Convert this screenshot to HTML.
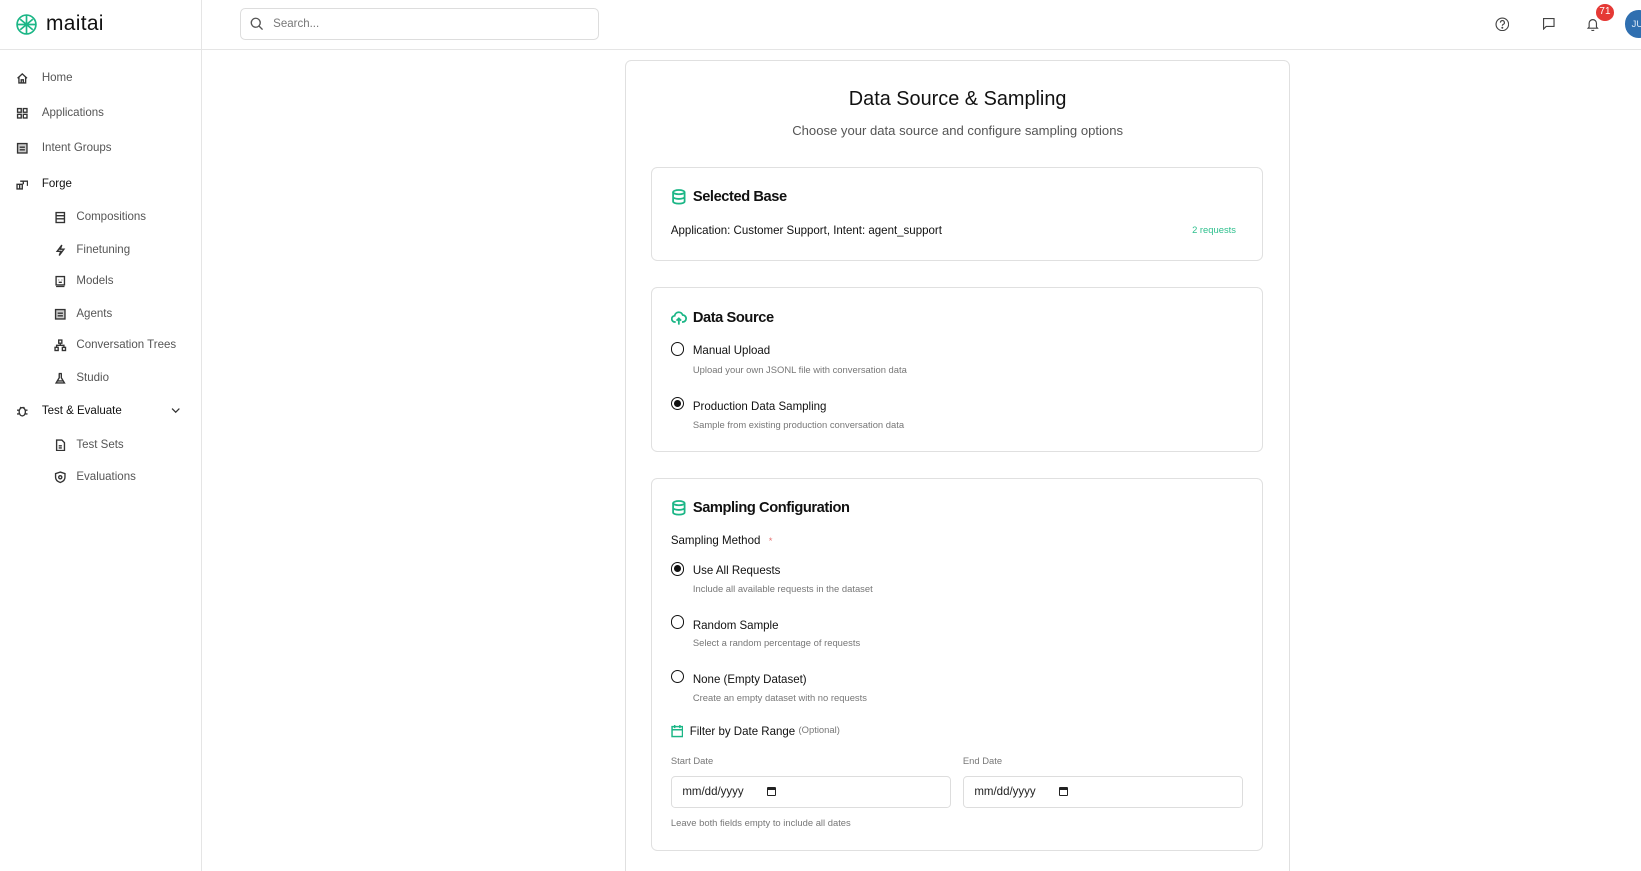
<!DOCTYPE html>
<html><head><meta charset="utf-8">
<style>
html{zoom:1.0466;overflow:hidden;height:832px}
*{box-sizing:border-box;margin:0;padding:0}
body{width:1568px;height:832px;overflow:hidden;background:#fff;font-family:"Liberation Sans",sans-serif;color:#111;position:relative}
.abs{position:absolute}
.side{left:0;top:0;width:193px;height:832px;border-right:1px solid #e5e5e5}
.hdr{left:0;top:47px;width:1568px;height:1px;background:#e5e5e5}
.nav{position:absolute;font-size:11px;color:#555;white-space:nowrap;padding-top:2px}
.nav svg{position:absolute;width:12px;height:12px;fill:none;stroke:#333;stroke-width:1.3}
.card{position:absolute;border:1px solid #e0e0e0;border-radius:6px;background:#fff}
.ttl{position:absolute;font-size:14px;font-weight:bold;letter-spacing:-0.4px;color:#111;padding-top:2px}
.ic{position:absolute;width:15px;height:15px;fill:none;stroke:#1bb686;stroke-width:1.7}
.radio{position:absolute;width:13px;height:13px;border:1.3px solid #111;border-radius:50%}
.radio.on::after{content:"";position:absolute;left:2px;top:2px;width:6.5px;height:6.5px;border-radius:50%;background:#111}
.lbl{position:absolute;font-size:11px;color:#111;padding-top:2px}
.desc{position:absolute;font-size:9px;color:#777;padding-top:1px}
.inp{position:absolute;width:268px;height:31px;border:1px solid #ddd;border-radius:4px;font-size:11px;color:#222;padding:9px 10px}
.cal{display:inline-block;width:9px;height:9px;border:1.5px solid #222;border-top-width:3px;border-radius:1px;margin-left:22px;vertical-align:-1px}
</style></head><body>
<div class="abs side"></div>
<div class="abs hdr"></div>
<svg class="abs" style="left:14px;top:12px" width="22" height="22" viewBox="0 0 22 22" fill="none" stroke="#1bb686" stroke-width="1.6"><circle cx="11" cy="11" r="9"/><path d="M5 6l12 10M17 6L5 16M11 2v18M2 11h18"/></svg>
<div class="abs" style="left:44px;top:11px;font-size:20px;letter-spacing:0.3px;color:#111">maitai</div>
<div class="abs" style="left:229px;top:8px;width:343px;height:30px;border:1px solid #ddd;border-radius:5px"></div>
<svg class="abs" style="left:239px;top:16px" width="13" height="13" viewBox="0 0 13 13" fill="none" stroke="#555" stroke-width="1.3"><circle cx="5.5" cy="5.5" r="4.3"/><path d="M8.7 8.7l3.3 3.3"/></svg>
<div class="abs" style="left:261px;top:17px;font-size:11px;color:#777">Search...</div>
<svg class="abs" style="left:1428px;top:16px" width="14" height="14" viewBox="0 0 14 14" fill="none" stroke="#444" stroke-width="1.1"><circle cx="7" cy="7" r="6"/><path d="M5.2 5.4a1.9 1.9 0 1 1 2.6 1.7c-.6.3-.8.6-.8 1.3"/><circle cx="7" cy="10.3" r=".4" fill="#444"/></svg>
<svg class="abs" style="left:1473px;top:16px" width="13" height="13" viewBox="0 0 13 13" fill="none" stroke="#444" stroke-width="1.1"><path d="M1.5 1.5h10v7.5H4l-2.5 2.5z"/></svg>
<svg class="abs" style="left:1515px;top:16px" width="13" height="14" viewBox="0 0 13 14" fill="none" stroke="#444" stroke-width="1.1"><path d="M3 9.5V6a3.5 3.5 0 0 1 7 0v3.5l1 1.2H2zM5.3 12.3a1.4 1.4 0 0 0 2.4 0"/></svg>
<div class="abs" style="left:1525px;top:4px;width:17px;height:16px;border-radius:50%;background:#e53935;color:#fff;font-size:9.5px;text-align:center;line-height:16px">71</div>
<div class="abs" style="left:1553px;top:10px;width:26px;height:26px;border-radius:50%;background:#2f6fb0;color:#dce9f7;font-size:9px;line-height:26px;padding-left:6px">JU</div>
<div class="nav" style="left:40px;top:67px"><svg style="left:-25px;top:2px" viewBox="0 0 12 12"><path d="M1.5 6L6 1.8 10.5 6M2.8 5v5.5h6.4V5M5 10.5V7.5h2v3"/></svg>Home</div>
<div class="nav" style="left:40px;top:100px"><svg style="left:-25px;top:2px" viewBox="0 0 12 12"><rect x="1.5" y="1.5" width="3.5" height="3.5"/><rect x="7" y="1.5" width="3.5" height="3.5"/><rect x="1.5" y="7" width="3.5" height="3.5"/><rect x="7" y="7" width="3.5" height="3.5"/></svg>Applications</div>
<div class="nav" style="left:40px;top:134px"><svg style="left:-25px;top:2px" viewBox="0 0 12 12"><rect x="1.5" y="1.5" width="9" height="9" fill="#ccc"/><path d="M3.5 5h5M3.5 7.5h5"/></svg>Intent Groups</div>
<div class="nav" style="left:40px;top:168px;color:#111"><svg style="left:-25px;top:2px" viewBox="0 0 12 12"><path d="M1 6h5v4.5H1zM4 3h7v4.5M3.5 6v4.5M7 3v3"/></svg>Forge</div>
<div class="nav" style="left:73px;top:200px"><svg style="left:-21px;top:2px" viewBox="0 0 12 12"><rect x="2" y="1.5" width="8" height="9.5"/><path d="M2 4.5h8M2 7.5h8"/></svg>Compositions</div>
<div class="nav" style="left:73px;top:231px"><svg style="left:-21px;top:2px" viewBox="0 0 12 12"><path d="M7.5 1L3 7h3.5L5 11l4.5-6H6z"/></svg>Finetuning</div>
<div class="nav" style="left:73px;top:261px"><svg style="left:-21px;top:2px" viewBox="0 0 12 12"><rect x="2" y="1.5" width="8" height="8"/><path d="M2 11h8M4.5 4.5v.5M7.5 4.5v.5M4.5 7h3"/></svg>Models</div>
<div class="nav" style="left:73px;top:292px"><svg style="left:-21px;top:2px" viewBox="0 0 12 12"><rect x="1.5" y="1.5" width="9" height="9" fill="#ccc"/><path d="M3.5 5h5M3.5 7.5h5"/></svg>Agents</div>
<div class="nav" style="left:73px;top:322px"><svg style="left:-21px;top:2px" viewBox="0 0 12 12"><rect x="4.5" y="1" width="3" height="3"/><rect x="1" y="8" width="3" height="3"/><rect x="8" y="8" width="3" height="3"/><path d="M6 4v2M2.5 8V6h7v2"/></svg>Conversation Trees</div>
<div class="nav" style="left:73px;top:353px"><svg style="left:-21px;top:2px" viewBox="0 0 12 12"><path d="M4.5 1.5h3M5 1.5v4L2 10.5h8L7 5.5v-4M3 8.5h6"/></svg>Studio</div>
<div class="nav" style="left:40px;top:385px;color:#111"><svg style="left:-25px;top:2px" viewBox="0 0 12 12"><ellipse cx="6" cy="6.5" rx="3" ry="4"/><path d="M1 5h2M9 5h2M1 8.5h2M9 8.5h2M4 2l1 1M8 2L7 3"/></svg>Test &amp; Evaluate</div>
<svg class="abs" style="left:163px;top:389px" width="9" height="7" viewBox="0 0 9 7" fill="none" stroke="#333" stroke-width="1.2"><path d="M1 1.5l3.5 3.5L8 1.5"/></svg>
<div class="nav" style="left:73px;top:417px"><svg style="left:-21px;top:2px" viewBox="0 0 12 12"><path d="M2.5 1h5l2.5 2.5V11h-7.5zM4.5 6.5h3M4.5 8.5h3"/></svg>Test Sets</div>
<div class="nav" style="left:73px;top:448px"><svg style="left:-21px;top:2px" viewBox="0 0 12 12"><path d="M6 1l4.5 1.5v3.5c0 2.5-2 4.2-4.5 5-2.5-.8-4.5-2.5-4.5-5V2.5z"/><circle cx="6" cy="6" r="1.5"/></svg>Evaluations</div>
<div class="card" style="left:597px;top:57px;width:636px;height:790px"></div>
<div class="abs" style="left:597px;width:636px;top:84px;text-align:center;font-size:19px;color:#111">Data Source &amp; Sampling</div>
<div class="abs" style="left:597px;width:636px;top:118px;text-align:center;font-size:12.5px;color:#555">Choose your data source and configure sampling options</div>
<div class="card" style="left:622px;top:160px;width:585px;height:89px"></div>
<svg class="ic" style="left:641px;top:181px" viewBox="0 0 15 15"><ellipse cx="7.5" cy="3" rx="5.5" ry="2"/><path d="M2 3v9c0 1.1 2.5 2 5.5 2s5.5-.9 5.5-2V3M2 7.5c0 1.1 2.5 2 5.5 2s5.5-.9 5.5-2"/></svg>
<div class="ttl" style="left:662px;top:179px">Selected Base</div>
<div class="lbl" style="left:641px;top:213px">Application: Customer Support, Intent: agent_support</div>
<div class="abs" style="left:1139px;top:214px;font-size:9px;color:#2fc08e">2 requests</div>
<div class="card" style="left:622px;top:274px;width:585px;height:158px"></div>
<svg class="ic" style="left:641px;top:296px" viewBox="0 0 15 15"><path d="M4.5 11.5H4a3 3 0 0 1-.5-6 4 4 0 0 1 7.7-.7A3 3 0 0 1 11 11.5h-.5M7.5 8v6M5.3 10.2l2.2-2.2 2.2 2.2"/></svg>
<div class="ttl" style="left:662px;top:294px">Data Source</div>
<div class="radio" style="left:641px;top:327px"></div>
<div class="lbl" style="left:662px;top:328px">Manual Upload</div>
<div class="desc" style="left:662px;top:347px">Upload your own JSONL file with conversation data</div>
<div class="radio on" style="left:641px;top:379px"></div>
<div class="lbl" style="left:662px;top:381px">Production Data Sampling</div>
<div class="desc" style="left:662px;top:399px">Sample from existing production conversation data</div>
<div class="card" style="left:622px;top:457px;width:585px;height:356px"></div>
<svg class="ic" style="left:641px;top:478px" viewBox="0 0 15 15"><ellipse cx="7.5" cy="3" rx="5.5" ry="2"/><path d="M2 3v9c0 1.1 2.5 2 5.5 2s5.5-.9 5.5-2V3M2 7.5c0 1.1 2.5 2 5.5 2s5.5-.9 5.5-2"/></svg>
<div class="ttl" style="left:662px;top:476px">Sampling Configuration</div>
<div class="lbl" style="left:641px;top:509px">Sampling Method <span style="color:#e57373;font-size:9px;margin-left:5px">*</span></div>
<div class="radio on" style="left:641px;top:537px"></div>
<div class="lbl" style="left:662px;top:538px">Use All Requests</div>
<div class="desc" style="left:662px;top:556px">Include all available requests in the dataset</div>
<div class="radio" style="left:641px;top:588px"></div>
<div class="lbl" style="left:662px;top:590px">Random Sample</div>
<div class="desc" style="left:662px;top:608px">Select a random percentage of requests</div>
<div class="radio" style="left:641px;top:640px"></div>
<div class="lbl" style="left:662px;top:642px">None (Empty Dataset)</div>
<div class="desc" style="left:662px;top:660px">Create an empty dataset with no requests</div>
<svg class="ic" style="left:641px;top:692px;width:12px;height:13px;stroke-width:1.4" viewBox="0 0 12 13"><rect x="1" y="2.5" width="10" height="9.5"/><path d="M1 5.5h10M3.5 1v3M8.5 1v3"/></svg>
<div class="lbl" style="left:659px;top:692px">Filter by Date Range</div>
<div class="desc" style="left:763px;top:691px">(Optional)</div>
<div class="desc" style="left:641px;top:720px">Start Date</div>
<div class="desc" style="left:920px;top:720px">End Date</div>
<div class="inp" style="left:641px;top:741px">mm/dd/yyyy<span class="cal"></span></div>
<div class="inp" style="left:920px;top:741px">mm/dd/yyyy<span class="cal"></span></div>
<div class="desc" style="left:641px;top:780px">Leave both fields empty to include all dates</div>
</body></html>
